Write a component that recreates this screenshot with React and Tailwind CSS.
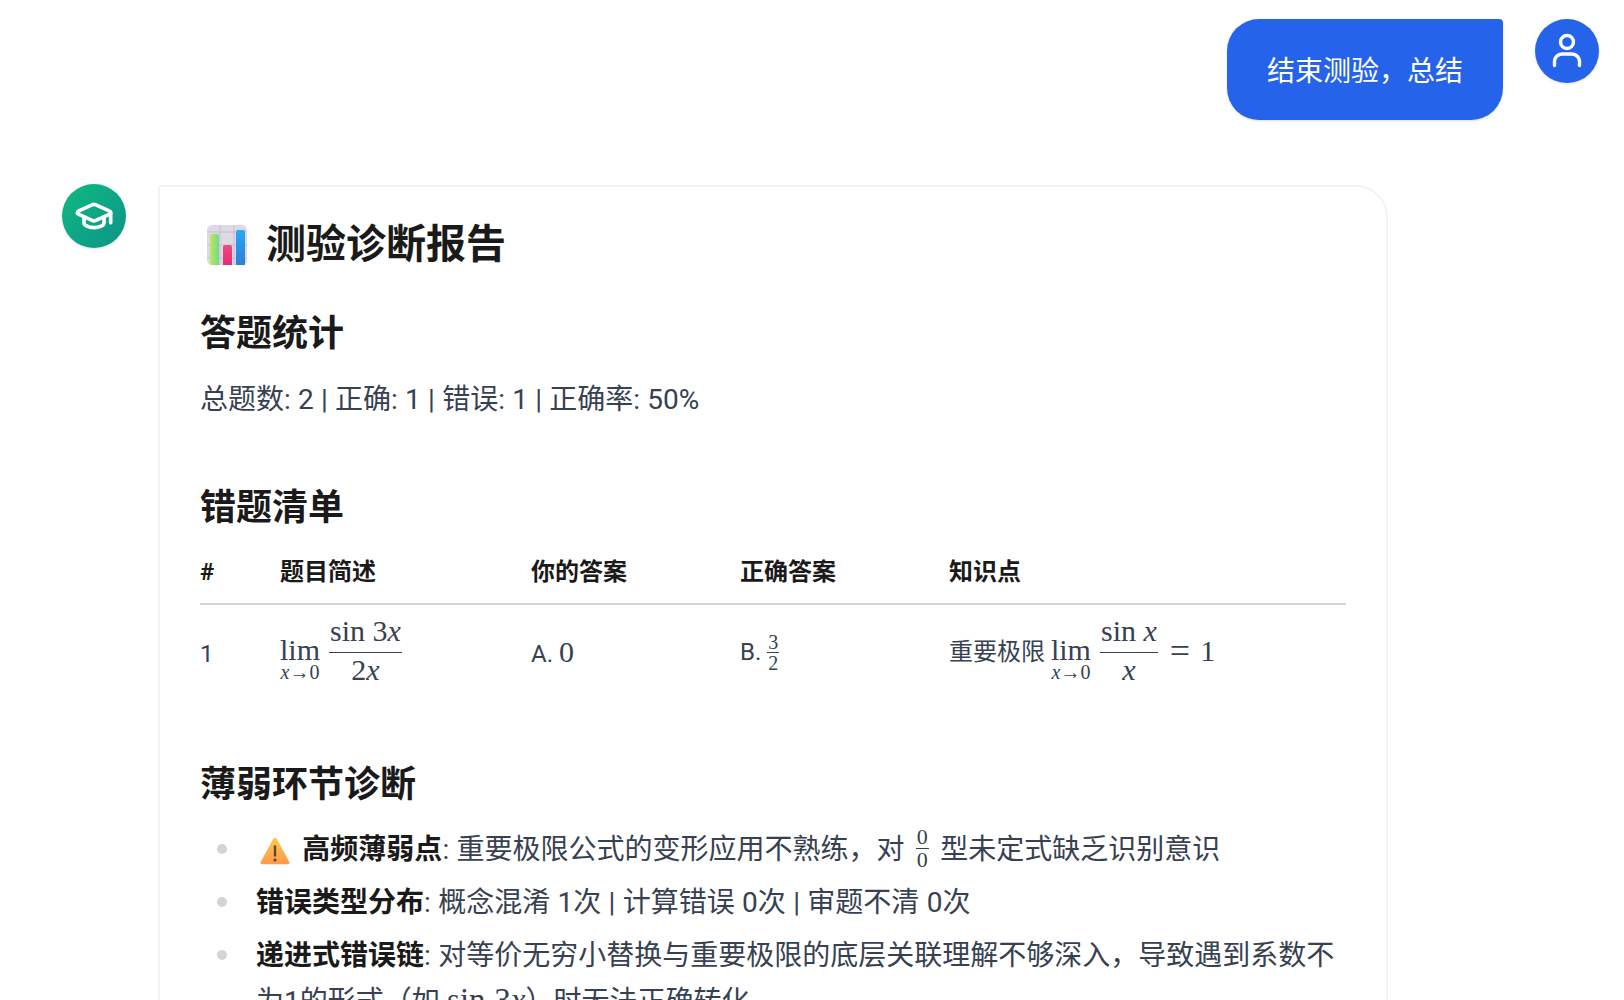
import React from "react";

const sans = "font-['Roboto','Noto_Sans_CJK_SC',sans-serif]";
const serif = "font-['Liberation_Serif',serif]";

function Frac({ top, bottom, size = "text-[30px]", cls = "mb-[6px]", topCls = "pb-[6px]", botCls = "pt-[2px]" }) {
  return (
    <span className={`inline-flex flex-col items-center align-middle ${serif} ${size} ${cls} leading-none`}>
      <span className={`px-px ${topCls}`}>{top}</span>
      <span className="w-full border-t border-[#374151]" />
      <span className={`px-px ${botCls}`}>{bottom}</span>
    </span>
  );
}

function Lim() {
  return (
    <span className={`inline-flex flex-col items-center align-middle ${serif} leading-none`}>
      <span className="text-[30px] leading-[27px]">lim</span>
      <span className="text-[20px] leading-[18px] mb-[-10px] whitespace-nowrap"><i>x</i>→0</span>
    </span>
  );
}

function ChartEmoji() {
  return (
    <svg viewBox="0 0 40 40" className="w-[40px] h-[40px] shrink-0">
      <rect width="40" height="40" rx="5" fill="#ded9e6" />
      <path d="M0 7h40M0 20h40M0 33h40M13 0v40M27 0v40" stroke="#c4bfcd" strokeWidth="1" />
      <defs>
        <linearGradient id="g1" x1="0" y1="0" x2="1" y2="0"><stop offset="0" stopColor="#bfe85a" /><stop offset="1" stopColor="#6fdc8c" /></linearGradient>
        <linearGradient id="g2" x1="0" y1="0" x2="0" y2="1"><stop offset="0" stopColor="#f04a7e" /><stop offset="1" stopColor="#e8287a" /></linearGradient>
        <linearGradient id="g3" x1="0" y1="0" x2="0" y2="1"><stop offset="0" stopColor="#27a8f5" /><stop offset="1" stopColor="#2b7fd8" /></linearGradient>
      </defs>
      <path d="M3 11a2 2 0 0 1 2-2h5a2 2 0 0 1 2 2v29H3z" fill="url(#g1)" />
      <path d="M16 22a2 2 0 0 1 2-2h5a2 2 0 0 1 2 2v18h-9z" fill="url(#g2)" />
      <path d="M29 7a2 2 0 0 1 2-2h5a2 2 0 0 1 2 2v33h-9z" fill="url(#g3)" />
    </svg>
  );
}

function WarnEmoji() {
  return (
    <svg viewBox="0 0 30 28" className="inline-block w-[30px] h-[28px] align-[-6px] ml-[4px]">
      <defs>
        <linearGradient id="w" x1="0" y1="0" x2="0" y2="1"><stop offset="0" stopColor="#ffc74d" /><stop offset="1" stopColor="#ff9a4a" /></linearGradient>
      </defs>
      <path d="M13.3 1.8a2 2 0 0 1 3.4 0l12.6 23.2a1.5 1.5 0 0 1-1.4 2.2H2.1A1.5 1.5 0 0 1 .7 25L13.3 1.8z" fill="url(#w)" />
      <path d="M15 9.5v9" stroke="#5b4a3c" strokeWidth="2.4" strokeLinecap="round" />
      <circle cx="15" cy="23" r="1.6" fill="#5b4a3c" />
    </svg>
  );
}

function Li({ children }) {
  return (
    <li className="relative pl-[56px]">
      <span className="absolute left-[17px] top-[17px] w-[10px] h-[10px] rounded-full bg-[#d4d4d8]" />
      {children}
    </li>
  );
}

const b = "font-bold text-[#1a1a1a]";
const th = "font-bold border-b-2 border-[#d4d4d8]";

export default function App() {
  return (
    <div className={`h-[1000px] overflow-hidden bg-white pt-[19px] pl-[62px] pr-[25px] ${sans}`}>
      <div className="flex justify-end gap-8">
        <div className="bg-[#2563eb] text-white text-[28px] leading-[41px] px-10 pt-[32px] pb-[28px] rounded-[32px] rounded-tr-[4px] shadow-sm">
          结束测验，总结
        </div>
        <div className="w-16 h-16 rounded-full bg-[#2563eb] flex items-center justify-center shadow-sm">
          <svg viewBox="0 0 32 36" className="w-[32px] h-[36px]" fill="none" stroke="white" strokeWidth="3.4" strokeLinecap="round">
            <circle cx="16" cy="9" r="6.5" />
            <path d="M3.5 32.5v-4a7.5 7.5 0 0 1 7.5-7.5h10a7.5 7.5 0 0 1 7.5 7.5v4" />
          </svg>
        </div>
      </div>

      <div className="flex gap-8 mt-16 items-start">
        <div className="w-16 h-16 rounded-full bg-gradient-to-br from-[#10b981] to-[#0d9488] flex items-center justify-center shrink-0 shadow-sm">
          <svg viewBox="0 0 24 24" className="w-[40px] h-[40px]" fill="none" stroke="white" strokeWidth="2.2" strokeLinecap="round" strokeLinejoin="round">
            <path d="M21.42 10.922a1 1 0 0 0-.019-1.838L12.83 5.18a2 2 0 0 0-1.66 0L2.6 9.08a1 1 0 0 0 0 1.832l8.57 3.908a2 2 0 0 0 1.66 0z" />
            <path d="M22 10v6" />
            <path d="M6 12.5V16a6 3 0 0 0 12 0v-3.5" />
          </svg>
        </div>
        <div className="w-[1230px] mt-px border-2 border-[#f3f4f6] rounded-[32px] rounded-tl-[4px] bg-white pl-10 pr-10 pt-[26px] pb-10">
          <h1 className="flex items-center gap-[19px] text-[40px] leading-[64px] font-bold text-[#1a1a1a]">
            <span className="ml-[7px] flex"><ChartEmoji /></span>测验诊断报告
          </h1>
          <h2 className="text-[36px] leading-[56px] font-bold text-[#1a1a1a] mt-[29px]">答题统计</h2>
          <p className="text-[28px] leading-[44px] text-[#374151] mt-[16px] [word-spacing:0.3px]">总题数: 2 | 正确: 1 | 错误: 1 | 正确率: 50%</p>

          <h2 className="text-[36px] leading-[56px] font-bold text-[#1a1a1a] mt-[58px]">错题清单</h2>
          <table className="w-full mt-[4px] text-[24px] text-[#374151] table-fixed border-separate border-spacing-0">
            <colgroup>
              <col className="w-[80px]" />
              <col className="w-[251px]" />
              <col className="w-[209px]" />
              <col className="w-[209px]" />
              <col />
            </colgroup>
            <thead>
              <tr className="h-[65px] text-left font-bold text-[#1a1a1a]">
                <th className={th}>#</th>
                <th className={th}>题目简述</th>
                <th className={th}>你的答案</th>
                <th className={th}>正确答案</th>
                <th className={th}>知识点</th>
              </tr>
            </thead>
            <tbody>
              <tr className="h-[97px]">
                <td>1</td>
                <td className="whitespace-nowrap">
                  <Lim />
                  <span className="inline-block w-[9px]" />
                  <Frac top={<>sin 3<i>x</i></>} bottom={<>2<i>x</i></>} />
                </td>
                <td className="whitespace-nowrap">A. <span className={`${serif} text-[30px] leading-none`}>0</span></td>
                <td className="whitespace-nowrap">B. <Frac size="text-[20px]" cls="mb-[2px]" topCls="" botCls="" top="3" bottom="2" /></td>
                <td className="whitespace-nowrap">
                  重要极限 <Lim />
                  <span className="inline-block w-[9px]" />
                  <Frac top={<>sin <i>x</i></>} bottom={<i>x</i>} />
                  <span className={`${serif} text-[36px] leading-none ml-[12px] align-[-3px]`}>=</span>
                  <span className={`${serif} text-[30px] leading-none ml-[10px] align-[-1px]`}>1</span>
                </td>
              </tr>
            </tbody>
          </table>

          <h2 className="text-[36px] leading-[56px] font-bold text-[#1a1a1a] mt-[55px]">薄弱环节诊断</h2>
          <ul className="text-[28px] leading-[46px] text-[#374151] mt-[14px] flex flex-col gap-[7px] [word-spacing:0.4px]">
            <Li>
              <WarnEmoji /> <span className={`${b} ml-[5px]`}>高频薄弱点</span>: 重要极限公式的变形应用不熟练，对 <Frac size="text-[22px]" cls="mx-[4px] mt-[-8px] mb-[-2px]" topCls="" botCls="" top="0" bottom="0" /> 型未定式缺乏识别意识
            </Li>
            <Li><span className={b}>错误类型分布</span>: 概念混淆 1次 | 计算错误 0次 | 审题不清 0次</Li>
            <Li>
              <span className={b}>递进式错误链</span>: 对等价无穷小替换与重要极限的底层关联理解不够深入，导致遇到系数不为1的形式（如 <span className={`${serif} text-[33px] leading-none`}>sin 3<i>x</i></span>）时无法正确转化
            </Li>
          </ul>
        </div>
      </div>
    </div>
  );
}
